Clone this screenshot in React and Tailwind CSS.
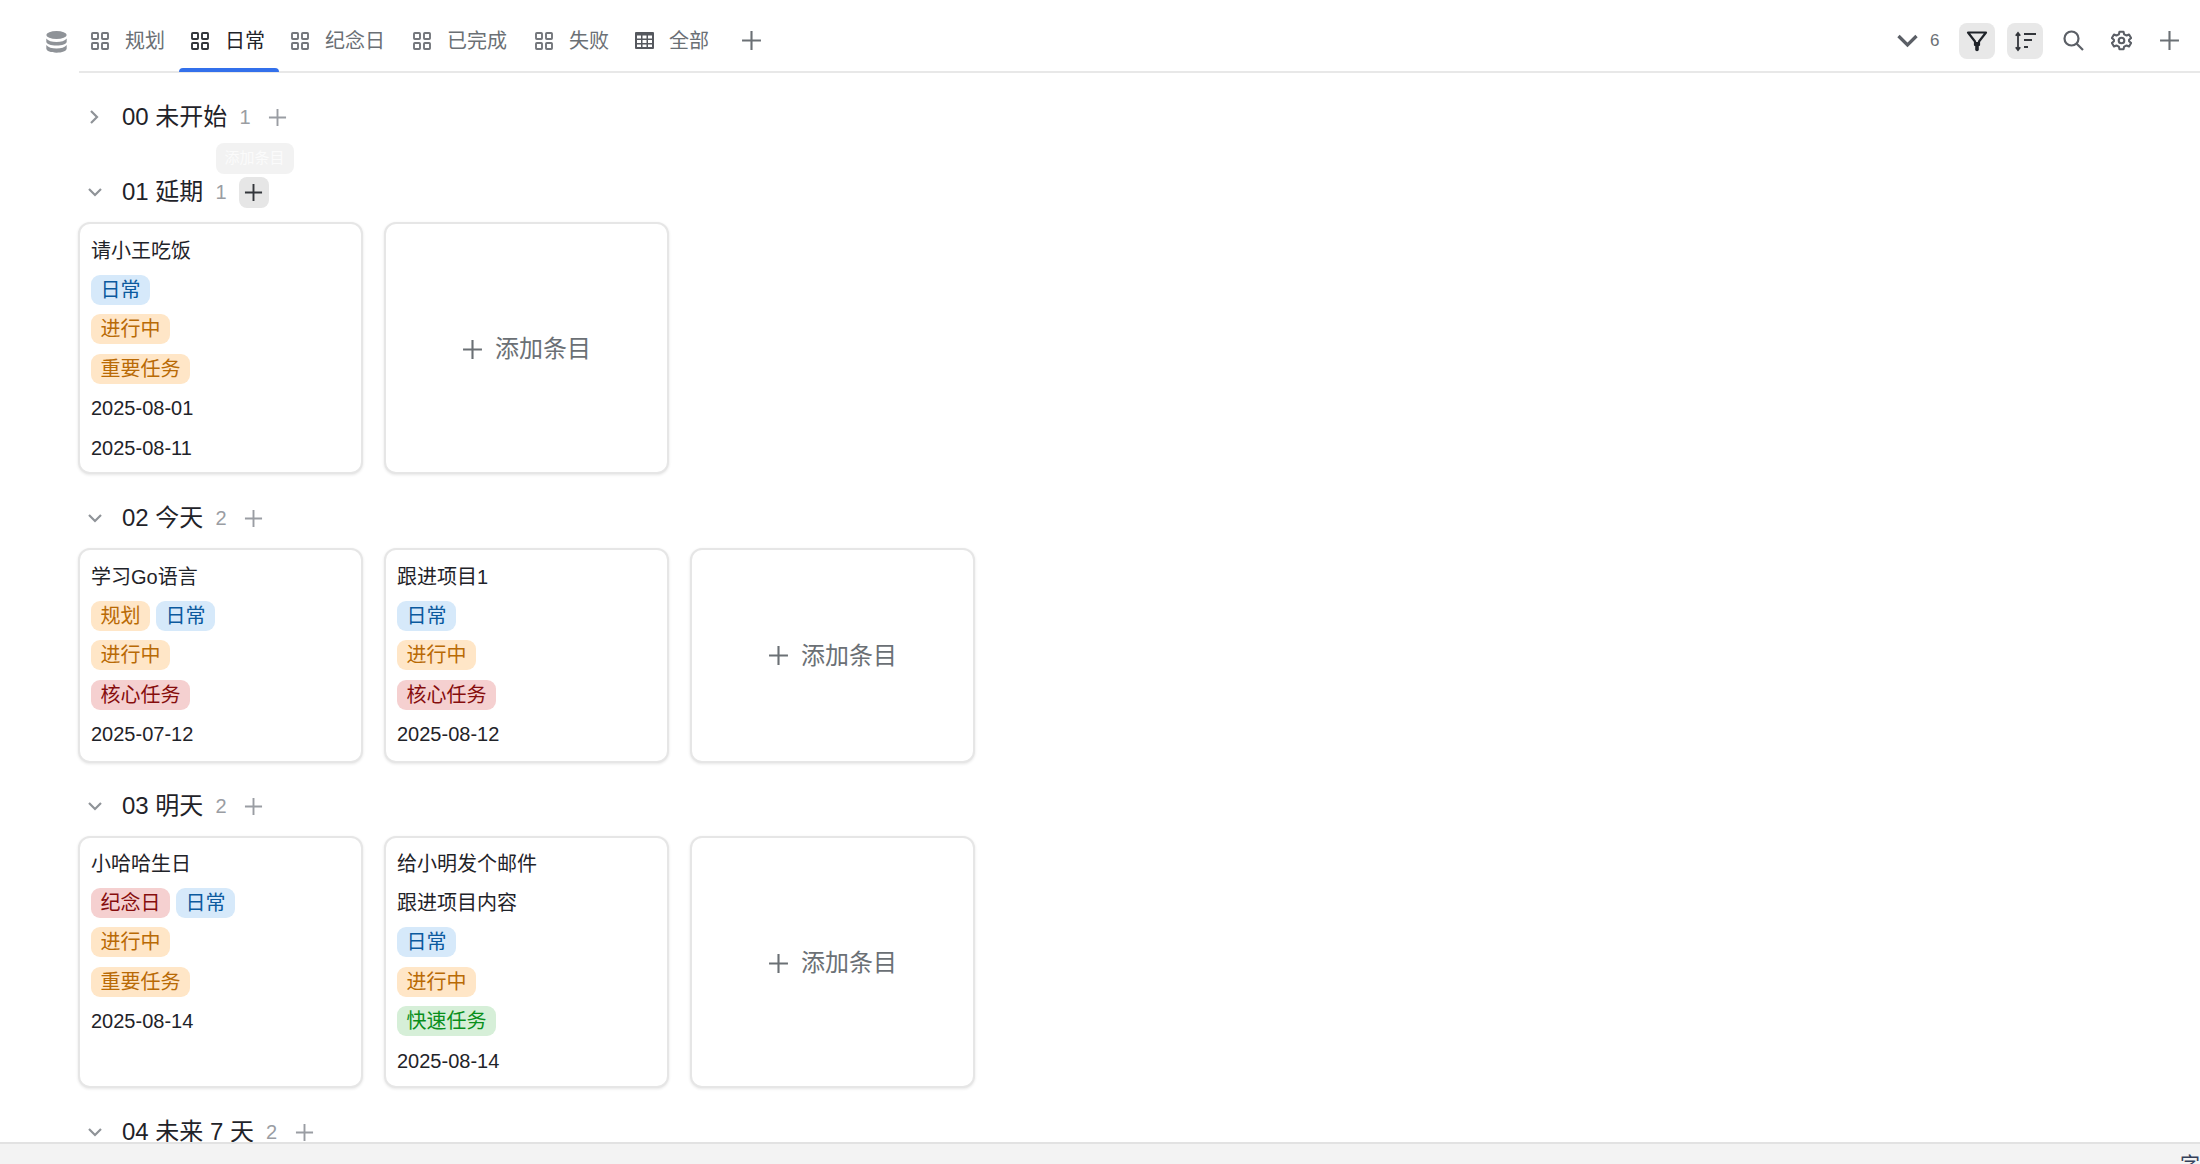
import React from "react";

const FONT = "font-['Liberation_Sans','Noto_Sans_CJK_SC',sans-serif]";

function Grid4({ className = "" }) {
  return (
    <svg viewBox="0 0 18 18" className={`w-[18px] h-[18px] ${className}`} fill="none" stroke="currentColor" strokeWidth="1.9">
      <rect x="1" y="1" width="6" height="6" rx="0.8" />
      <rect x="11" y="1" width="6" height="6" rx="0.8" />
      <rect x="1" y="11" width="6" height="6" rx="0.8" />
      <rect x="11" y="11" width="6" height="6" rx="0.8" />
    </svg>
  );
}
function Table({ className = "" }) {
  return (
    <svg viewBox="0 0 19 17" className={`w-[19px] h-[17px] ${className}`} fill="currentColor">
      <path
        fillRule="evenodd"
        d="M1 0H18A1 1 0 0 1 19 1V16A1 1 0 0 1 18 17H1A1 1 0 0 1 0 16V1A1 1 0 0 1 1 0ZM2 3.5V6.5H6V3.5ZM7.5 3.5V6.5H11.5V3.5ZM13 3.5V6.5H17V3.5ZM2 8V11H6V8ZM7.5 8V11H11.5V8ZM13 8V11H17V8ZM2 12.5V15H6V12.5ZM7.5 12.5V15H11.5V12.5ZM13 12.5V15H17V12.5Z"
      />
    </svg>
  );
}
function Plus({ className = "", size = 20, w = 2 }) {
  return (
    <svg viewBox="0 0 20 20" style={{ width: size, height: size }} className={className} fill="none" stroke="currentColor" strokeWidth={w}>
      <path d="M10 1V19M1 10H19" />
    </svg>
  );
}
function Chevron({ open, className = "" }) {
  return (
    <svg viewBox="0 0 14 14" className={`w-[14px] h-[14px] ${className}`} fill="none" stroke="currentColor" strokeWidth="2.2">
      {open ? <path d="M1 4L7 10L13 4" /> : <path d="M4 1L10 7L4 13" />}
    </svg>
  );
}

const tabs = [
  ["规划", 0], ["日常", 1], ["纪念日", 0], ["已完成", 0], ["失败", 0],
];

function Tab({ label, active, table }) {
  return (
    <div className={`relative flex items-center h-full pl-3 text-[20px] pt-[10px] ${label.length === 3 ? "pr-4" : "pr-[14px]"} ${table ? "gap-[15px]" : "gap-4"} ${active ? "text-[#1f2329]" : "text-[#6b7075]"}`}>
      {table ? <Table className="text-[#55585e]" /> : <Grid4 className={active ? "text-[#33363b]" : "text-[#74777c]"} />}
      <span>{label}</span>
      {active && <div className="absolute left-0 right-0 -bottom-[1px] h-1 rounded-t-sm bg-[#3370eb]" />}
    </div>
  );
}

function Top() {
  return (
    <div className="flex items-stretch h-[73px] shrink-0">
      <div className="w-[79px] shrink-0 pl-[46px] pt-[10px] flex items-center">
        <svg viewBox="0 0 21 22" className="w-[21px] h-[22px] text-[#8f9398]" fill="currentColor">
          <ellipse cx="10.5" cy="4" rx="10.2" ry="4" />
          <path d="M0.3 7.4C2 9.8 6 10.9 10.5 10.9S19 9.8 20.7 7.4V10.8C20.7 13 16 14.6 10.5 14.6S0.3 13 0.3 10.8Z" />
          <path d="M0.3 14C2 16.4 6 17.5 10.5 17.5S19 16.4 20.7 14V17.6C20.7 20 16 21.8 10.5 21.8S0.3 20 0.3 17.6Z" />
        </svg>
      </div>
      <div className="flex-1 flex items-stretch border-b-2 border-[#e8e8e8] pr-5">
        {tabs.map(([l, a]) => <Tab key={l} label={l} active={!!a} />)}
        <Tab label="全部" table />
        <div className="flex items-center pl-[18px] pt-[10px] text-[#6b7075]"><Plus size={21} /></div>
        <div className="flex-1" />
        <div className="flex items-center pt-[10px] text-[#5b5f66]">
          <Chevron open className="!w-[21px] !h-[21px]" />
          <span className="ml-3 text-[17px] text-[#6b7075] w-[29px]">6</span>
          <div className="w-9 h-9 rounded-lg bg-[#e8e8e8] flex items-center justify-center text-[#1f2329]">
            <svg viewBox="0 0 22 22" className="w-[22px] h-[22px]" fill="none" stroke="currentColor" strokeWidth="2.2" strokeLinejoin="round">
              <path d="M2 2.5H20L13 11.5V15H9V11.5Z" />
              <path d="M9.2 12H12.8V19.5A1.8 1.8 0 0 1 9.2 19.5Z" fill="currentColor" stroke="none" />
            </svg>
          </div>
          <div className="ml-3 w-9 h-9 rounded-lg bg-[#e8e8e8] flex items-center justify-center text-[#33363b]">
            <svg viewBox="0 0 22 22" className="w-[22px] h-[22px]" fill="none" stroke="currentColor" strokeWidth="1.8">
              <path d="M4 4V19M1.8 5.8L4 3L6.2 5.8M1.8 17.2L4 20L6.2 17.2M10 4H22M10 10H18M10 17H14" />
            </svg>
          </div>
          <svg viewBox="0 0 21 21" className="ml-5 w-[21px] h-[21px]" fill="none" stroke="currentColor" strokeWidth="2.2">
            <circle cx="8.5" cy="8.5" r="7" />
            <path d="M13.5 13.5L20 20" />
          </svg>
          <svg viewBox="0 0 24 24" className="ml-[27px] w-[21px] h-[21px]" fill="none" stroke="currentColor" strokeWidth="2.4" strokeLinejoin="round">
            <circle cx="12" cy="12" r="3.2" />
            <path d="M9.7 2H14.3L15 5L17.8 6.3L20.6 5.2L23 9.2L20.7 11.2V12.8L23 14.8L20.6 18.8L17.8 17.7L15 19L14.3 22H9.7L9 19L6.2 17.7L3.4 18.8L1 14.8L3.3 12.8V11.2L1 9.2L3.4 5.2L6.2 6.3L9 5Z" />
          </svg>
          <Plus size={21} className="ml-[27px] text-[#6b7075]" />
        </div>
      </div>
    </div>
  );
}

const tagStyles = {
  blue: "bg-[#d6e9fa] text-[#0b5a9e]",
  orange: "bg-[#ffe6c7] text-[#b96a05]",
  red: "bg-[#f5d0d0] text-[#860d0d]",
  green: "bg-[#d6efd8] text-[#0a8f1c]",
};

function Tag({ c, children }) {
  return <span className={`inline-flex items-center h-[30px] px-[9.5px] rounded-[9px] text-[20px] ${tagStyles[c]}`}>{children}</span>;
}
function Row({ children }) {
  return <div className="h-[39.4px] flex items-center gap-[6px] text-[20px] text-[#1f2329]">{children}</div>;
}

function Card({ rows, h, tight }) {
  return (
    <div className={`w-[285px] rounded-[12px] border-2 border-[#e6e6e6] shadow-[0_1px_3px_rgba(0,0,0,0.1)] bg-white pl-[11px] ${tight ? "pt-[6px]" : "pt-[7px]"}`} style={{ height: h }}>
      {rows.map((r, i) => (
        <Row key={i}>
          {typeof r === "string" ? r : r.map(([c, t]) => <Tag key={t} c={c}>{t}</Tag>)}
        </Row>
      ))}
    </div>
  );
}
function AddCard({ h }) {
  return (
    <div className={`w-[285px] rounded-[12px] border-2 border-[#e6e6e6] shadow-[0_1px_3px_rgba(0,0,0,0.1)] bg-white flex items-center justify-center gap-3 text-[24px] text-[#6b7075] ${h === 252 ? "pt-[2px]" : ""}`} style={{ height: h }}>
      <Plus size={21} />
      <span>添加条目</span>
    </div>
  );
}

function Header({ title, count, open, hover, className = "" }) {
  return (
    <div className={`relative flex items-center h-[32px] text-[24px] text-[#1f2329] ${className}`}>
      <div className={`w-[44px] flex text-[#8f9398] ${open ? "pl-[10px]" : "pl-[9px]"}`}><Chevron open={open} /></div>
      <span className="whitespace-pre">{title}</span>
      <span className="ml-3 text-[20px] text-[#9a9da3]">{count}</span>
      {hover ? (
        <div className="relative ml-3 w-[30px] h-[31px] rounded-lg bg-[#e6e6e6] flex items-center justify-center text-[#33363b]">
          <Plus size={19} />
          <div className="absolute -top-[34px] left-[-23px] w-[78px] h-[31px] rounded-lg bg-[#f2f2f2] text-[#fbfbfb] text-[15px] flex items-center justify-center">添加条目</div>
        </div>
      ) : (
        <div className="ml-3 w-[30px] flex items-center justify-center text-[#9a9da3]"><Plus size={19} /></div>
      )}
    </div>
  );
}

function Cards({ children }) {
  return <div className="flex gap-[21px] mt-[14px]">{children}</div>;
}

const blue = ["blue", "日常"];
const doing = [["orange", "进行中"]];
const imp = [["orange", "重要任务"]];
const core = [["red", "核心任务"]];

export default function App() {
  return (
    <div className={`h-[1164px] w-[2200px] overflow-hidden flex flex-col bg-white ${FONT}`}>
      <Top />
      <div className="flex-1 overflow-hidden pl-[78px] pt-[28px]">
        <Header title="00 未开始" count="1" />
        <Header title="01 延期" count="1" open hover className="mt-[43px]" />
        <Cards>
          <Card h={252} rows={["请小王吃饭", [blue], doing, imp, "2025-08-01", "2025-08-11"]} />
          <AddCard h={252} />
        </Cards>
        <Header title="02 今天" count="2" open className="mt-[28px]" />
        <Cards>
          <Card h={215} rows={["学习Go语言", [["orange", "规划"], blue], doing, core, "2025-07-12"]} />
          <Card h={215} rows={["跟进项目1", [blue], doing, core, "2025-08-12"]} />
          <AddCard h={215} />
        </Cards>
        <Header title="03 明天" count="2" open className="mt-[27px]" />
        <Cards>
          <Card tight h={252} rows={["小哈哈生日", [["red", "纪念日"], blue], doing, imp, "2025-08-14"]} />
          <Card tight h={252} rows={["给小明发个邮件", "跟进项目内容", [blue], doing, [["green", "快速任务"]], "2025-08-14"]} />
          <AddCard h={252} />
        </Cards>
        <Header title="04 未来 7 天" count="2" open className="mt-[28px]" />
      </div>
      <div className="h-[22px] shrink-0 border-t-2 border-[#e2e2e2] bg-[#f3f3f3] flex justify-end overflow-hidden">
        <span className="text-[20px] leading-none mt-[11px] text-[#33405a]">字</span>
      </div>
    </div>
  );
}
